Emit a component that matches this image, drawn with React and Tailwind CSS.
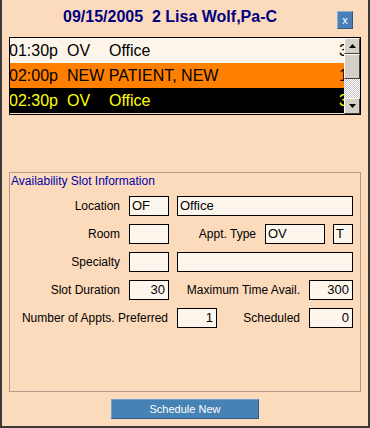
import React from "react";

const FONT = { fontFamily: '"Liberation Sans", Arial, sans-serif' };

const rows = [
  { time: "01:30p", type: "OV", desc: "Office", num: "3", cls: "bg-[#fdf5ea] text-black" },
  { time: "02:00p", type: "NEW PATIENT, NEW", desc: "", num: "1", cls: "bg-[#ff8000] text-black" },
  { time: "02:30p", type: "OV", desc: "Office", num: "3", cls: "bg-black text-[#ffff00]" },
];

const Field = ({ w, value = "", right = false }) => (
  <div
    className={`h-[20px] border border-black bg-[#fdf6ec] text-[13px] leading-[18px] text-black whitespace-nowrap overflow-hidden ${
      right ? "text-right pr-[3px]" : "pl-[2px]"
    } ${w}`}
  >
    {value}
  </div>
);

const Label = ({ w, children }) => (
  <div className={`text-right text-[12px] leading-[20px] text-black whitespace-nowrap ${w}`}>{children}</div>
);

const Arrow = ({ up }) => (
  <div className="h-[16px] w-[16px] bg-[#d4d0c8] border-t border-l border-t-white border-l-white border-r border-b border-r-[#404040] border-b-[#404040] flex items-center justify-center">
    <svg width="7" height="4" viewBox="0 0 7 4">
      {up ? <polygon points="3.5,0 7,4 0,4" fill="#000" /> : <polygon points="0,0 7,0 3.5,4" fill="#000" />}
    </svg>
  </div>
);

export default function App() {
  return (
    <div
      className="w-[370px] h-[428px] bg-[#fcdbbc] border-l-2 border-r-2 border-b-2 border-[#3a3a3a] flex flex-col"
      style={FONT}
    >
      {/* Header */}
      <div className="h-[37px] flex items-start">
        <div className="ml-[61px] mt-[8px] text-[16px] leading-[18px] font-bold text-[#000080] whitespace-pre">
          {"09/15/2005  2 Lisa Wolf,Pa-C"}
        </div>
        <button className="ml-auto mr-[15px] mt-[11px] w-[16px] h-[18px] bg-[#4a80b8] border border-t-[#8ab0d8] border-l-[#8ab0d8] border-r-[#2f5a88] border-b-[#2f5a88] text-white text-[11px] leading-[14px] flex items-center justify-center">
          x
        </button>
      </div>

      {/* Appointment list */}
      <div className="mx-[7px] h-[78px] border border-black flex">
        <div className="flex-1 overflow-hidden">
          {rows.map((r, i) => (
            <div key={i} className={`h-[25px] flex items-center text-[16px] leading-[25px] whitespace-nowrap ${r.cls}`}>
              <span className="w-[58px] ml-[-1px]">{r.time}</span>
              <span className="w-[42px]">{r.type}</span>
              <span>{r.desc}</span>
              <span className="ml-auto mr-[-4px]">{r.num}</span>
            </div>
          ))}
        </div>
        <div className="w-[16px] flex flex-col">
          <Arrow up />
          <div className="h-[25px] bg-[#d4d0c8] border-t border-l border-t-white border-l-white border-r border-b border-r-[#404040] border-b-[#404040]" />
          <div className="flex-1 bg-[repeating-conic-gradient(#ffffff_0_25%,#c8c8c8_0_50%)] bg-[length:2px_2px]" />
          <Arrow />
        </div>
      </div>

      {/* Slot info group */}
      <div className="mx-[7px] mt-[57px] h-[220px] border border-[#b8988a] flex flex-col">
        <div className="pl-[1px] pt-[1px] text-[12px] leading-[14px] text-[#0000a8]">Availability Slot Information</div>
        <div className="mt-[8px] flex flex-col gap-[8px]">
          <div className="flex">
            <Label w="w-[110px]">Location</Label>
            <div className="ml-[9px]"><Field w="w-[40px]" value="OF" /></div>
            <div className="ml-[8px]"><Field w="w-[176px]" value="Office" /></div>
          </div>
          <div className="flex">
            <Label w="w-[110px]">Room</Label>
            <div className="ml-[9px]"><Field w="w-[40px]" /></div>
            <Label w="w-[87px]">Appt. Type</Label>
            <div className="ml-[9px]"><Field w="w-[60px]" value="OV" /></div>
            <div className="ml-[8px]"><Field w="w-[20px]" value="T" /></div>
          </div>
          <div className="flex">
            <Label w="w-[110px]">Specialty</Label>
            <div className="ml-[9px]"><Field w="w-[40px]" /></div>
            <div className="ml-[8px]"><Field w="w-[176px]" /></div>
          </div>
          <div className="flex">
            <Label w="w-[110px]">Slot Duration</Label>
            <div className="ml-[9px]"><Field w="w-[40px]" value="30" right /></div>
            <Label w="w-[131px]">Maximum Time Avail.</Label>
            <div className="ml-[9px]"><Field w="w-[44px]" value="300" right /></div>
          </div>
          <div className="flex">
            <Label w="w-[158px]">Number of Appts. Preferred</Label>
            <div className="ml-[9px]"><Field w="w-[40px]" value="1" right /></div>
            <Label w="w-[83px]">Scheduled</Label>
            <div className="ml-[9px]"><Field w="w-[44px]" value="0" right /></div>
          </div>
        </div>
      </div>

      {/* Action */}
      <button className="mx-auto mt-[7px] w-[148px] h-[20px] bg-[#4682b4] border border-t-[#6fa3d4] border-l-[#6fa3d4] border-r-[#2c5c8c] border-b-[#2c5c8c] text-white text-[11px] leading-[18px]">
        Schedule New
      </button>
    </div>
  );
}
